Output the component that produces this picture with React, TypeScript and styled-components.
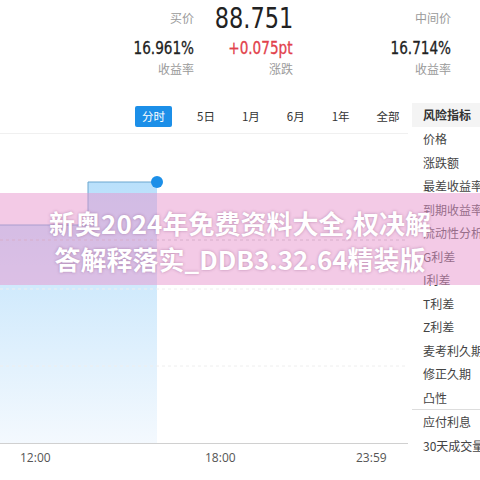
import React from 'react'
import styled, { createGlobalStyle } from 'styled-components'

const Global = createGlobalStyle`
  html, body { margin: 0; padding: 0; background: #fff; }
  body { font-family: "Noto Sans CJK SC", "Noto Sans", sans-serif; }
`

const Page = styled.div`
  position: relative;
  width: 480px;
  height: 480px;
  overflow: hidden;
  background: #fff;
`

const Header = styled.div`
  display: grid;
  grid-template-columns: 194px 99px 158px;
  grid-template-rows: 36px 24px 18px;
  height: 100px;
`

const Cell = styled.div`
  display: flex;
  justify-content: flex-end;
  align-items: center;
  line-height: 1;
`

const Label = styled.span`
  font-size: 12px;
  color: #9a9a9a;
`

const BigNum = styled.span`
  font-family: "Liberation Sans Narrow", "DejaVu Sans Condensed", sans-serif;
  font-size: 29px;
  font-weight: 500;
  color: #222;
  display: inline-block;
  transform: scaleX(0.86);
  transform-origin: right center;
`

const Num = styled.span<{ $up?: boolean }>`
  font-family: "Liberation Sans Narrow", "DejaVu Sans Condensed", sans-serif;
  font-size: 18px;
  font-weight: 400;
  display: inline-block;
  transform: scaleX(0.84);
  transform-origin: right center;
  -webkit-text-stroke: 0.3px currentColor;
  color: ${p => (p.$up ? '#e2414b' : '#222')};
`

const Body = styled.div`
  display: flex;
`

const Main = styled.div`
  width: 412px;
  display: flex;
  flex-direction: column;
`

const Tabs = styled.div`
  height: 33px;
  display: flex;
  align-items: center;
  padding-left: 135px;
  border-bottom: 1px solid #f0f0f0;
  margin-right: 4px;
  white-space: nowrap;
`

const Tab = styled.div<{ $active?: boolean }>`
  font-size: 11.5px;
  flex: none;
  white-space: nowrap;
  color: ${p => (p.$active ? '#fff' : '#333')};
  background: ${p => (p.$active ? '#1c8fe8' : 'transparent')};
  border-radius: 2px;
  height: 21px;
  line-height: 21px;
  padding: 0 ${p => (p.$active ? 7 : 0)}px;
  margin-right: ${p => (p.$active ? 25 : 27)}px;
`

const Axis = styled.div`
  height: 30px;
  font-family: "Open Sans", "DejaVu Sans", sans-serif;
  font-size: 12px;
  color: #555;
  display: flex;
  padding-top: 5px;
`

const Tick = styled.span<{ $w: number }>`
  width: ${p => p.$w}px;
`

const Side = styled.div`
  width: 68px;
  padding-top: 3px;
`

const SideHead = styled.div`
  background: #f4f4f4;
  font-size: 12px;
  font-weight: 700;
  color: #333;
  height: 24px;
  line-height: 24px;
  padding-left: 11px;
  white-space: nowrap;
`

const SideItem = styled.div<{ $sep?: boolean }>`
  font-size: 12px;
  color: #444;
  height: 23.5px;
  line-height: 23.5px;
  padding-left: 11px;
  white-space: nowrap;
  overflow: hidden;
  border-top: ${p => (p.$sep ? '1px solid #ddd' : 'none')};
`

const Banner = styled.div`
  position: absolute;
  left: 0;
  top: 193px;
  width: 480px;
  height: 92px;
  box-sizing: border-box;
  padding-top: 4px;
  background: rgba(232, 150, 205, 0.5);
  display: flex;
  flex-direction: column;
  align-items: center;
  justify-content: center;
  color: #fff;
  font-family: "Noto Sans CJK SC", "Noto Sans", sans-serif;
  font-weight: 700;
  font-size: 26px;
  line-height: 36px;
  text-shadow: 0 0 3px rgba(120, 60, 110, 0.45);
  white-space: nowrap;
`

const items = ['价格', '涨跌额', '最差收益率', '到期收益率', '流动性分析', 'G利差', 'I利差', 'T利差', 'Z利差', '麦考利久期', '修正久期', '凸性']

function Chart() {
  return (
    <svg width={412} height={310} viewBox="0 0 412 310">
      <defs>
        <linearGradient id="fill" x1="0" y1="0" x2="0" y2="1">
          <stop offset="0" stopColor="#b9e0fb" />
          <stop offset="1" stopColor="#f4f9fe" />
        </linearGradient>
      </defs>
      <path d="M0 91 L88 91 L88 48 L157 48 L157 310 L0 310 Z" fill="url(#fill)" />
      <line x1="0" y1="106" x2="408" y2="106" stroke="#c8c8c8" strokeDasharray="3 3" />
      <line x1="0" y1="155" x2="408" y2="155" stroke="#eee" strokeDasharray="3 3" />
      <line x1="0" y1="232" x2="408" y2="232" stroke="#eee" strokeDasharray="3 3" />
      <path d="M0 91 L88 91 L88 48 L157 48" fill="none" stroke="#6aa6cf" strokeWidth={1} />
      <circle cx={157} cy={48} r={6} fill="#1c8fe8" />
      <line x1="0" y1="309.5" x2="408" y2="309.5" stroke="#d0d0d0" />
    </svg>
  )
}

export default function App() {
  return (
    <Page>
      <Global />
      <Header>
        <Cell><Label>买价</Label></Cell>
        <Cell><BigNum>88.751</BigNum></Cell>
        <Cell><Label>中间价</Label></Cell>
        <Cell><Num>16.961%</Num></Cell>
        <Cell><Num $up>+0.075pt</Num></Cell>
        <Cell><Num>16.714%</Num></Cell>
        <Cell><Label>收益率</Label></Cell>
        <Cell><Label>涨跌</Label></Cell>
        <Cell><Label>收益率</Label></Cell>
      </Header>
      <Body>
        <Main>
          <Tabs>
            <Tab $active>分时</Tab>
            <Tab>5日</Tab>
            <Tab>1月</Tab>
            <Tab>6月</Tab>
            <Tab>1年</Tab>
            <Tab>全部</Tab>
          </Tabs>
          <Chart />
          <Axis>
            <Tick $w={20} />
            <Tick $w={185}>12:00</Tick>
            <Tick $w={151}>18:00</Tick>
            <Tick $w={40}>23:59</Tick>
          </Axis>
        </Main>
        <Side>
          <SideHead>风险指标</SideHead>
          {items.map((it, i) => (
            <SideItem key={i}>{it}</SideItem>
          ))}
          <SideItem $sep>应付利息</SideItem>
          <SideItem>30天成交量</SideItem>
        </Side>
      </Body>
      <Banner>
        <div>新奥2024年免费资料大全,权决解</div>
        <div>答解释落实_DDB3.32.64精装版</div>
      </Banner>
    </Page>
  )
}
